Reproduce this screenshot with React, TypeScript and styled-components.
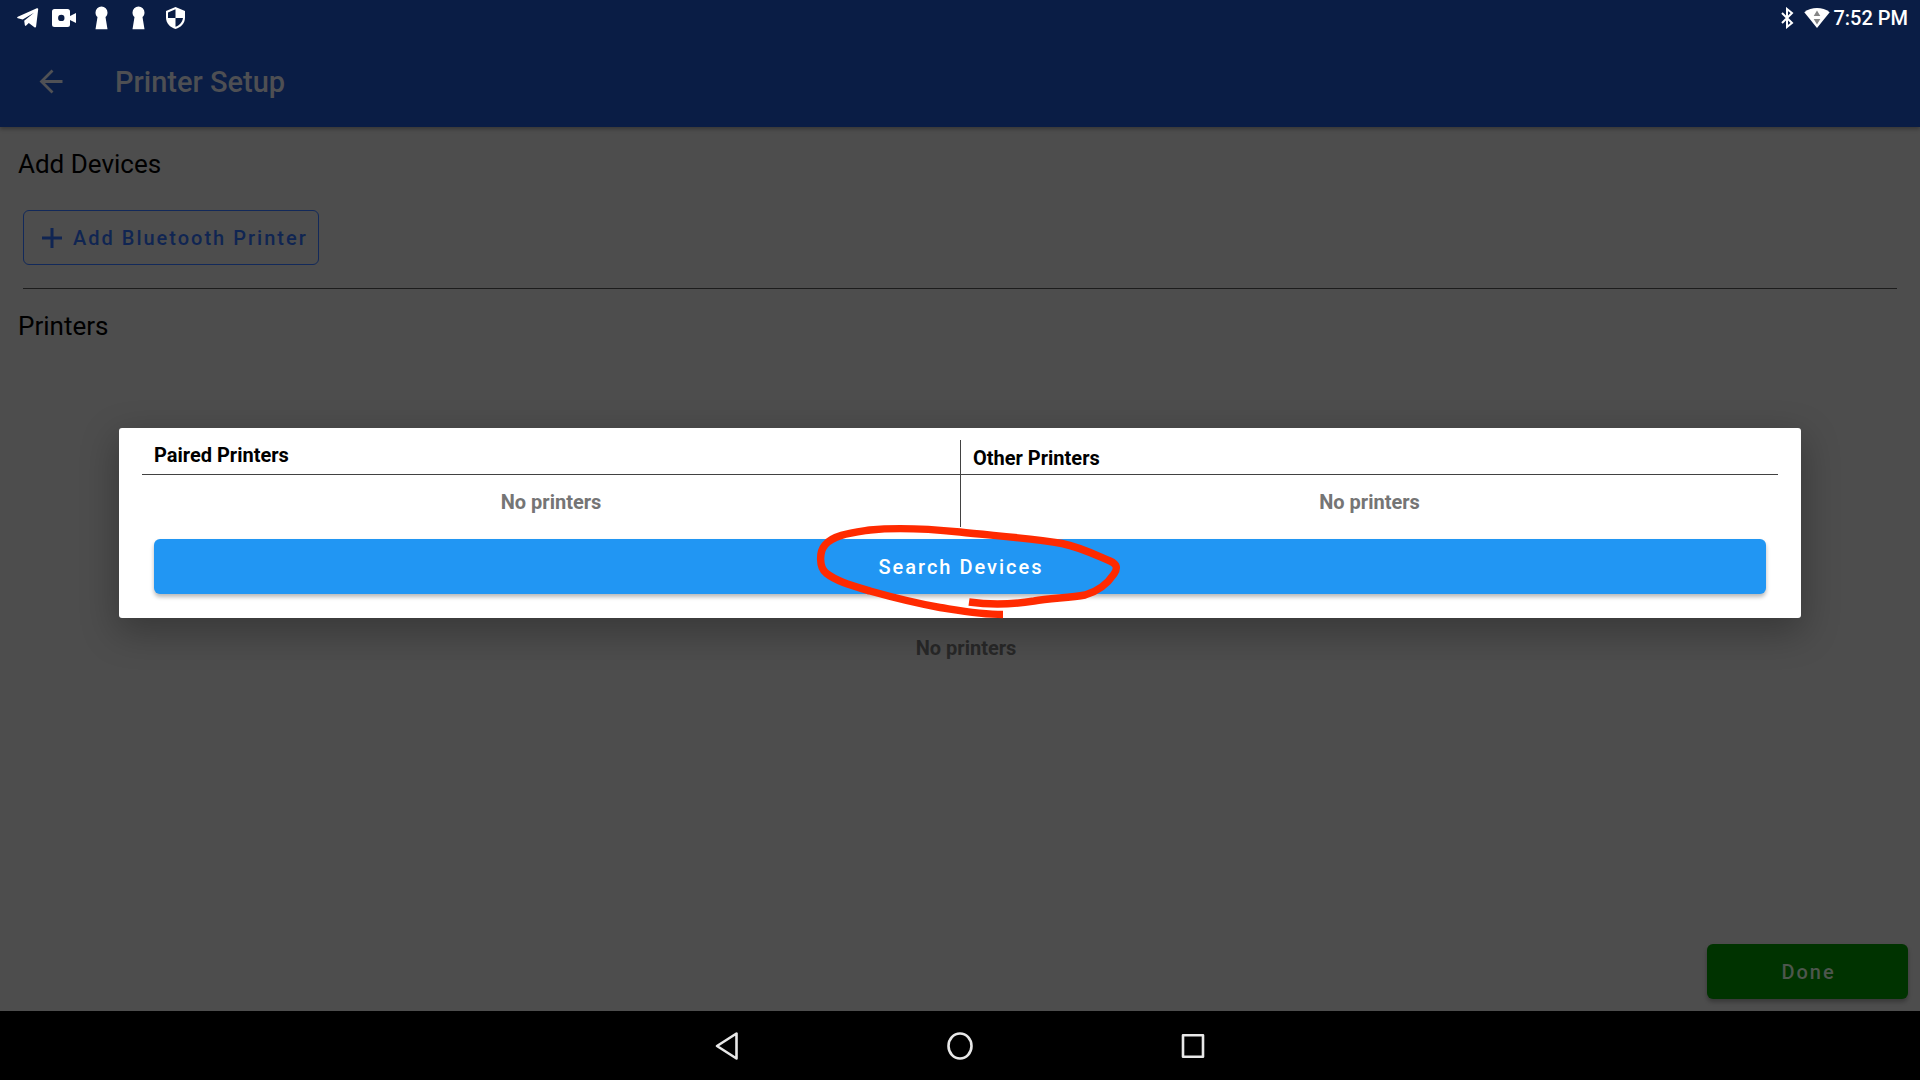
import React from "react";
import styled, { createGlobalStyle } from "styled-components";

const GlobalStyle = createGlobalStyle`
  *, *::before, *::after { box-sizing: border-box; }
  body { margin: 0; background: #4d4d4d; }
  body, button { font-family: Roboto, "Noto Sans", sans-serif; }
  h1, h2, h3, p { margin: 0; }
`;

const Screen = styled.div`
  position: relative;
  display: flex;
  flex-direction: column;
  min-height: 100vh;
  background: #4d4d4d;
  color: #000;
`;

const Header = styled.header`
  background: #0a1d45;
  box-shadow: 0 2px 4px rgba(0, 0, 0, 0.3);
`;

const StatusBar = styled.div`
  display: flex;
  justify-content: space-between;
  align-items: center;
  height: 36px;
  padding: 0 12px 0 17px;
  color: #fff;
`;

const StatusGroup = styled.div<{ $gap: number }>`
  display: flex;
  align-items: center;
  gap: ${(p) => p.$gap}px;
`;

const Clock = styled.time`
  font-size: 20px;
  font-weight: 500;
  line-height: 24px;
`;

const AppBar = styled.div`
  display: flex;
  align-items: center;
  gap: 49px;
  height: 91px;
  padding: 0 36px;
`;

const BackButton = styled.button`
  display: flex;
  padding: 0;
  border: 0;
  background: none;
  color: #505155;
`;

const Title = styled.h1`
  color: #4e4f53;
  font-size: 29px;
  font-weight: 500;
  line-height: 36px;
`;

const Main = styled.main`
  display: flex;
  flex: 1;
  flex-direction: column;
  padding: 20px 12px 12px;
`;

const SectionTitle = styled.h2`
  padding-left: 6px;
  font-size: 26px;
  font-weight: 400;
  line-height: 34px;
`;

const OutlineButton = styled.button`
  display: flex;
  align-items: center;
  align-self: flex-start;
  gap: 11px;
  height: 55px;
  margin: 29px 11px 23px;
  padding: 0 10px 0 18px;
  border: 1px solid #12295a;
  border-radius: 6px;
  background: none;
  color: #102552;
  font-size: 20px;
  font-weight: 500;
  letter-spacing: 2px;
`;

const Divider = styled.hr`
  width: calc(100% - 22px);
  height: 1px;
  margin: 0 11px 20px;
  border: 0;
  background: #1c1c1c;
`;

const EmptyArea = styled.div`
  display: flex;
  flex: 1;
  align-items: center;
  justify-content: center;
  padding: 8px 0 0 12px;
`;

const EmptyText = styled.p<{ $dim?: boolean }>`
  color: ${(p) => (p.$dim ? "#282828" : "#757575")};
  font-size: 20px;
  font-weight: 700;
  line-height: 24px;
  text-align: center;
`;

const FilledButton = styled.button<{ $tone: "blue" | "green" }>`
  height: 55px;
  padding: 0 22px 0 24px;
  border: 0;
  border-radius: 6px;
  background: ${(p) => (p.$tone === "blue" ? "#2196f3" : "#003300")};
  color: ${(p) => (p.$tone === "blue" ? "#fff" : "#4d564d")};
  box-shadow: 0 3px 4px rgba(0, 0, 0, 0.28);
  font-size: 20px;
  font-weight: 500;
  letter-spacing: 2px;
`;

const Actions = styled.footer`
  display: flex;
  justify-content: flex-end;

  ${FilledButton} { width: 201px; }
`;

const NavBar = styled.nav`
  display: flex;
  align-items: center;
  justify-content: center;
  gap: 205px;
  height: 69px;
  background: #000;
`;

const NavButton = styled.button`
  display: flex;
  padding: 0;
  border: 0;
  background: none;
`;

const ModalLayer = styled.div`
  position: absolute;
  inset: 36px 0 70px;
  display: flex;
  align-items: center;
  justify-content: center;
  padding: 0 119px;
`;

const Dialog = styled.section`
  display: flex;
  flex: 1;
  flex-direction: column;
  padding: 12px 23px 24px;
  border-radius: 3px;
  background: #fff;
  box-shadow: 0 12px 36px 2px rgba(0, 0, 0, 0.28);
`;

const Columns = styled.div`
  display: grid;
  grid-template-columns: 1fr 1fr;
  margin-bottom: 12px;
`;

const Column = styled.div`
  & + & { border-left: 1px solid #424242; }
`;

const ColumnTitle = styled.h3<{ $top: number }>`
  height: 35px;
  padding: ${(p) => p.$top}px 12px 0;
  border-bottom: 1px solid #424242;
  font-size: 20px;
  font-weight: 700;
  line-height: 24px;
`;

const ColumnBody = styled.div`
  height: 52px;
  padding-top: 15px;
`;

const SearchRow = styled.div`
  position: relative;
  display: flex;
  justify-content: center;
  padding: 0 12px;

  ${FilledButton} { flex: 1; }
`;

const Scribble = styled.svg`
  position: absolute;
  top: -19px;
  left: calc(50% - 150px);
  pointer-events: none;
`;

function KeyholeIcon() {
  return (
    <svg width="13" height="24" viewBox="0 0 13 24" fill="currentColor" aria-hidden="true">
      <path d="M6.5 0.5a6 6 0 0 1 6 6c0 2-.8 3.500-2 4.600L12.500 23.200H.5L2.500 11.100C1.300 10 .5 8.500.5 6.500a6 6 0 0 1 6-6z" />
    </svg>
  );
}

export default function App() {
  return (
    <>
      <GlobalStyle />
      <Screen>
        <Header>
          <StatusBar>
            <StatusGroup $gap={19}>
              <StatusGroup $gap={13}>
                <svg width="22" height="20" viewBox="0 0 22 20" fill="currentColor" aria-hidden="true">
                  <path d="M19.800.3c.9-.4 1.500 0 1.400 1l-2.100 17.200c-.1 1-.9 1.300-1.700.7L11.800 15l-2.600 2.600c-.6.600-1.300.3-1.400-.5l-.6-4.300L17 4.700 5.700 11.500.9 10.300c-1-.3-1.100-1.100-.1-1.600z" />
                </svg>
                <svg width="24" height="18" viewBox="0 0 24 18" fill="currentColor" aria-hidden="true">
                  <path fillRule="evenodd" d="M2.500 0h13A2.500 2.500 0 0 1 18 2.500v4.500L24 4v10l-6-3v4.500a2.500 2.500 0 0 1-2.500 2.500h-13A2.500 2.500 0 0 1 0 15.500v-13A2.500 2.500 0 0 1 2.500 0zM9.300 5.700a3.200 3.200 0 1 0 0 6.400 3.200 3.200 0 0 0 0-6.400z" />
                </svg>
              </StatusGroup>
              <StatusGroup $gap={21}>
                <StatusGroup $gap={24}>
                  <KeyholeIcon />
                  <KeyholeIcon />
                </StatusGroup>
                <svg width="19" height="22" viewBox="0 0 19 22" aria-hidden="true">
                  <path d="M9.500 0 19 4v6.500c0 5.500-4 10-9.500 11.500C4 20.500 0 16 0 10.500V4z" fill="#fff" />
                  <path d="M9.500 2.200V10.900H2V5.400zM9.500 10.900H17c-.6 4-3.500 7.600-7.500 8.900z" fill="#0a1d45" />
                </svg>
              </StatusGroup>
            </StatusGroup>
            <StatusGroup $gap={3}>
              <StatusGroup $gap={10}>
                <svg width="14" height="22" viewBox="0 0 14 22" fill="none" stroke="currentColor" strokeWidth="2" aria-hidden="true">
                  <path d="M2 6l10 10-5 4v-18L12 6 2 16" />
                </svg>
                <svg width="26" height="20" viewBox="0 0 26 20" aria-hidden="true">
                  <path d="M.3 4.200C7.500-1.300 18.500-1.300 25.700 4.200L13 20z" fill="#fff" />
                  <path d="M13 2.500l3.300 5.500H9.700zM13 16.500l-3.300-5.500h6.600z" fill="#858585" />
                </svg>
              </StatusGroup>
              <Clock>7:52 PM</Clock>
            </StatusGroup>
          </StatusBar>
          <AppBar>
            <BackButton aria-label="Back">
              <svg width="30" height="30" viewBox="0 0 30 30" fill="none" stroke="currentColor" strokeWidth="2.800" aria-hidden="true">
                <path d="M26.500 14.500H5M16.500 3.500 5.500 14.500l11 11" />
              </svg>
            </BackButton>
            <Title>Printer Setup</Title>
          </AppBar>
        </Header>

        <Main>
          <SectionTitle>Add Devices</SectionTitle>
          <OutlineButton>
            <svg width="20" height="20" viewBox="0 0 20 20" stroke="currentColor" strokeWidth="3" aria-hidden="true">
              <path d="M10 0v20M0 10h20" />
            </svg>
            Add Bluetooth Printer
          </OutlineButton>
          <Divider />
          <SectionTitle>Printers</SectionTitle>
          <EmptyArea>
            <EmptyText $dim>No printers</EmptyText>
          </EmptyArea>
          <Actions>
            <FilledButton $tone="green">Done</FilledButton>
          </Actions>
        </Main>

        <NavBar>
          <NavButton aria-label="Back">
            <svg width="28" height="30" viewBox="0 0 28 30" fill="none" stroke="#e8e8e8" strokeWidth="2.600" strokeLinejoin="round" aria-hidden="true">
              <path d="M23.500 2.500v25L4 15z" />
            </svg>
          </NavButton>
          <NavButton aria-label="Home">
            <svg width="28" height="30" viewBox="0 0 28 30" fill="none" stroke="#e8e8e8" strokeWidth="2.600" aria-hidden="true">
              <ellipse cx="14" cy="15" rx="11.500" ry="12.500" />
            </svg>
          </NavButton>
          <NavButton aria-label="Recent apps">
            <svg width="28" height="30" viewBox="0 0 28 30" fill="none" stroke="#e8e8e8" strokeWidth="2.600" strokeLinejoin="round" aria-hidden="true">
              <path d="M4 4.300h20v21.500H4z" />
            </svg>
          </NavButton>
        </NavBar>

        <ModalLayer>
          <Dialog role="dialog" aria-label="Printers">
            <Columns>
              <Column>
                <ColumnTitle $top={3}>Paired Printers</ColumnTitle>
                <ColumnBody>
                  <EmptyText>No printers</EmptyText>
                </ColumnBody>
              </Column>
              <Column>
                <ColumnTitle $top={6}>Other Printers</ColumnTitle>
                <ColumnBody>
                  <EmptyText>No printers</EmptyText>
                </ColumnBody>
              </Column>
            </Columns>
            <SearchRow>
              <FilledButton $tone="blue">Search Devices</FilledButton>
              <Scribble width="320" height="104" viewBox="810 520 320 104" fill="none" stroke="#ff2a00" strokeWidth="7.400" aria-hidden="true">
                <path d="M1003 614.500C980 614.500 962 611 940 607.500C915 603 895 598 870 591C850 585 836 581 826 573C819 567 819 552 825 545C833 535 851 533 870 530C895 527.500 930 529 960 532C990 535.500 1030 538 1062 543.500C1080 547 1098 556 1110 561C1117 564 1118 568 1114 574C1108 583 1099 591 1085 595C1070 598 1050 598 1034 601C1012 604.500 990 605 969 602" />
              </Scribble>
            </SearchRow>
          </Dialog>
        </ModalLayer>
      </Screen>
    </>
  );
}
